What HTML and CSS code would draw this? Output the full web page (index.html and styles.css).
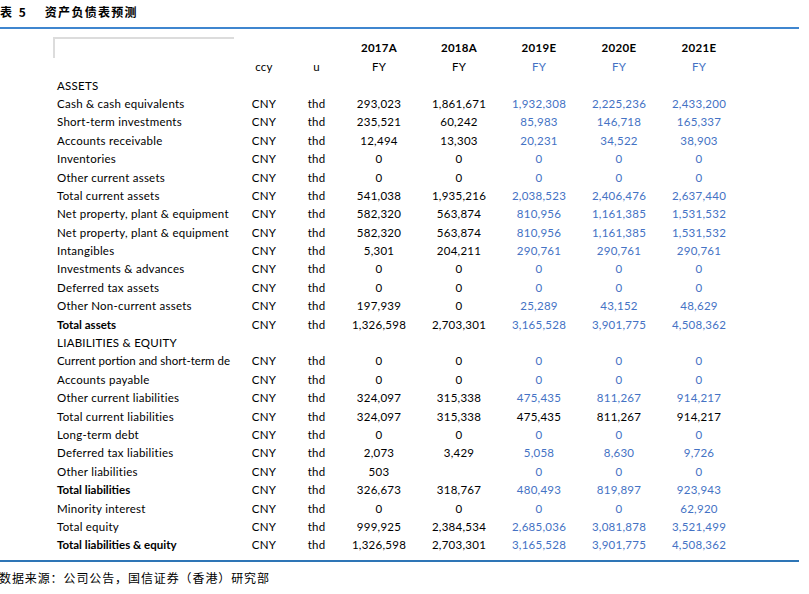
FILE: index.html
```html
<!DOCTYPE html>
<html lang="zh">
<head>
<meta charset="utf-8">
<link rel="stylesheet" href="styles.css">
<title>资产负债表预测</title>
</head>
<body>
<div class="page">
  <div class="title"><span class="tno">表 5</span><span class="tname">资产负债表预测</span></div>
  <table class="bs">
    <colgroup>
      <col class="c-label"><col class="c-ccy"><col class="c-u">
      <col class="c-num"><col class="c-num"><col class="c-num"><col class="c-num"><col class="c-num">
    </colgroup>
    <tr class="h1"><td class="boxcell"></td><td></td><td></td><td>2017A</td><td>2018A</td><td>2019E</td><td>2020E</td><td>2021E</td></tr>
    <tr><td></td><td>ccy</td><td>u</td><td>FY</td><td>FY</td><td class="e">FY</td><td class="e">FY</td><td class="e">FY</td></tr>
    <tr><td class="lab">ASSETS</td><td></td><td></td><td></td><td></td><td></td><td></td><td></td></tr>
    <tr><td class="lab">Cash &amp; cash equivalents</td><td>CNY</td><td>thd</td><td>293,023</td><td>1,861,671</td><td class="e">1,932,308</td><td class="e">2,225,236</td><td class="e">2,433,200</td></tr>
    <tr><td class="lab">Short-term investments</td><td>CNY</td><td>thd</td><td>235,521</td><td>60,242</td><td class="e">85,983</td><td class="e">146,718</td><td class="e">165,337</td></tr>
    <tr><td class="lab">Accounts receivable</td><td>CNY</td><td>thd</td><td>12,494</td><td>13,303</td><td class="e">20,231</td><td class="e">34,522</td><td class="e">38,903</td></tr>
    <tr><td class="lab">Inventories</td><td>CNY</td><td>thd</td><td>0</td><td>0</td><td class="e">0</td><td class="e">0</td><td class="e">0</td></tr>
    <tr><td class="lab">Other current assets</td><td>CNY</td><td>thd</td><td>0</td><td>0</td><td class="e">0</td><td class="e">0</td><td class="e">0</td></tr>
    <tr><td class="lab">Total current assets</td><td>CNY</td><td>thd</td><td>541,038</td><td>1,935,216</td><td class="e">2,038,523</td><td class="e">2,406,476</td><td class="e">2,637,440</td></tr>
    <tr><td class="lab">Net property, plant &amp; equipment</td><td>CNY</td><td>thd</td><td>582,320</td><td>563,874</td><td class="e">810,956</td><td class="e">1,161,385</td><td class="e">1,531,532</td></tr>
    <tr><td class="lab">Net property, plant &amp; equipment</td><td>CNY</td><td>thd</td><td>582,320</td><td>563,874</td><td class="e">810,956</td><td class="e">1,161,385</td><td class="e">1,531,532</td></tr>
    <tr><td class="lab">Intangibles</td><td>CNY</td><td>thd</td><td>5,301</td><td>204,211</td><td class="e">290,761</td><td class="e">290,761</td><td class="e">290,761</td></tr>
    <tr><td class="lab">Investments &amp; advances</td><td>CNY</td><td>thd</td><td>0</td><td>0</td><td class="e">0</td><td class="e">0</td><td class="e">0</td></tr>
    <tr><td class="lab">Deferred tax assets</td><td>CNY</td><td>thd</td><td>0</td><td>0</td><td class="e">0</td><td class="e">0</td><td class="e">0</td></tr>
    <tr><td class="lab">Other Non-current assets</td><td>CNY</td><td>thd</td><td>197,939</td><td>0</td><td class="e">25,289</td><td class="e">43,152</td><td class="e">48,629</td></tr>
    <tr><td class="lab b">Total assets</td><td>CNY</td><td>thd</td><td>1,326,598</td><td>2,703,301</td><td class="e">3,165,528</td><td class="e">3,901,775</td><td class="e">4,508,362</td></tr>
    <tr><td class="lab">LIABILITIES &amp; EQUITY</td><td></td><td></td><td></td><td></td><td></td><td></td><td></td></tr>
    <tr><td class="lab tight">Current portion and short-term de</td><td>CNY</td><td>thd</td><td>0</td><td>0</td><td class="e">0</td><td class="e">0</td><td class="e">0</td></tr>
    <tr><td class="lab">Accounts payable</td><td>CNY</td><td>thd</td><td>0</td><td>0</td><td class="e">0</td><td class="e">0</td><td class="e">0</td></tr>
    <tr><td class="lab">Other current liabilities</td><td>CNY</td><td>thd</td><td>324,097</td><td>315,338</td><td class="e">475,435</td><td class="e">811,267</td><td class="e">914,217</td></tr>
    <tr><td class="lab">Total current liabilities</td><td>CNY</td><td>thd</td><td>324,097</td><td>315,338</td><td>475,435</td><td>811,267</td><td>914,217</td></tr>
    <tr><td class="lab">Long-term debt</td><td>CNY</td><td>thd</td><td>0</td><td>0</td><td class="e">0</td><td class="e">0</td><td class="e">0</td></tr>
    <tr><td class="lab">Deferred tax liabilities</td><td>CNY</td><td>thd</td><td>2,073</td><td>3,429</td><td class="e">5,058</td><td class="e">8,630</td><td class="e">9,726</td></tr>
    <tr><td class="lab">Other liabilities</td><td>CNY</td><td>thd</td><td>503</td><td></td><td class="e">0</td><td class="e">0</td><td class="e">0</td></tr>
    <tr><td class="lab b">Total liabilities</td><td>CNY</td><td>thd</td><td>326,673</td><td>318,767</td><td class="e">480,493</td><td class="e">819,897</td><td class="e">923,943</td></tr>
    <tr><td class="lab">Minority interest</td><td>CNY</td><td>thd</td><td>0</td><td>0</td><td class="e">0</td><td class="e">0</td><td class="e">62,920</td></tr>
    <tr><td class="lab">Total equity</td><td>CNY</td><td>thd</td><td>999,925</td><td>2,384,534</td><td class="e">2,685,036</td><td class="e">3,081,878</td><td class="e">3,521,499</td></tr>
    <tr><td class="lab b">Total liabilities &amp; equity</td><td>CNY</td><td>thd</td><td>1,326,598</td><td>2,703,301</td><td class="e">3,165,528</td><td class="e">3,901,775</td><td class="e">4,508,362</td></tr>
  </table>
  <div class="rule"></div>
  <div class="source">数据来源：公司公告，国信证券（香港）研究部</div>
</div>
</body>
</html>
```
FILE: styles.css
```css
html, body {
  margin: 0;
  padding: 0;
  background: #fff;
}
.page {
  width: 799px;
  font-family: Lato, "Open Sans", "Noto Sans CJK SC", sans-serif;
  color: #000;
}
.title {
  height: 29px;
  box-sizing: border-box;
  padding-bottom: 5px;
  display: flex;
  align-items: center;
  gap: 17px;
  font-family: "Noto Sans CJK SC", sans-serif;
  font-weight: 700;
  font-size: 12px;
  border-bottom: 2px solid #3f86cf;
  letter-spacing: 1.3px;
}
.title .tno {
  letter-spacing: 2px;
}
.bs {
  margin: 8px 0 0 53px;
  border-collapse: collapse;
  table-layout: fixed;
  width: 685px;
  font-size: 11.5px;
  letter-spacing: 0.25px;
}
.c-label { width: 180px; }
.c-ccy { width: 60px; }
.c-u { width: 45px; }
.c-num { width: 80px; }
.bs td {
  height: 18.4px;
  padding: 0;
  text-align: center;
  white-space: nowrap;
  overflow: hidden;
  line-height: 18px;
}
.bs tr.h1 td {
  height: 19px;
  font-weight: 700;
  letter-spacing: 0.3px;
}
.bs td.boxcell {
  border-top: 2px solid #dcdcdc;
  border-left: 2px solid #dcdcdc;
}
.bs td.lab {
  text-align: left;
  padding-left: 3px;
}
.bs td.tight {
  letter-spacing: 0;
}
.bs td.b {
  font-weight: 700;
  letter-spacing: 0;
}
.bs td.e {
  color: #4472c4;
}
.rule {
  margin-top: 5px;
  height: 2px;
  background: #2e75b6;
}
.source {
  margin: 6px 0 0 -1px;
  font-family: "Noto Sans CJK SC", sans-serif;
  font-size: 12px;
  letter-spacing: 0.9px;
  line-height: 20px;
}
```
